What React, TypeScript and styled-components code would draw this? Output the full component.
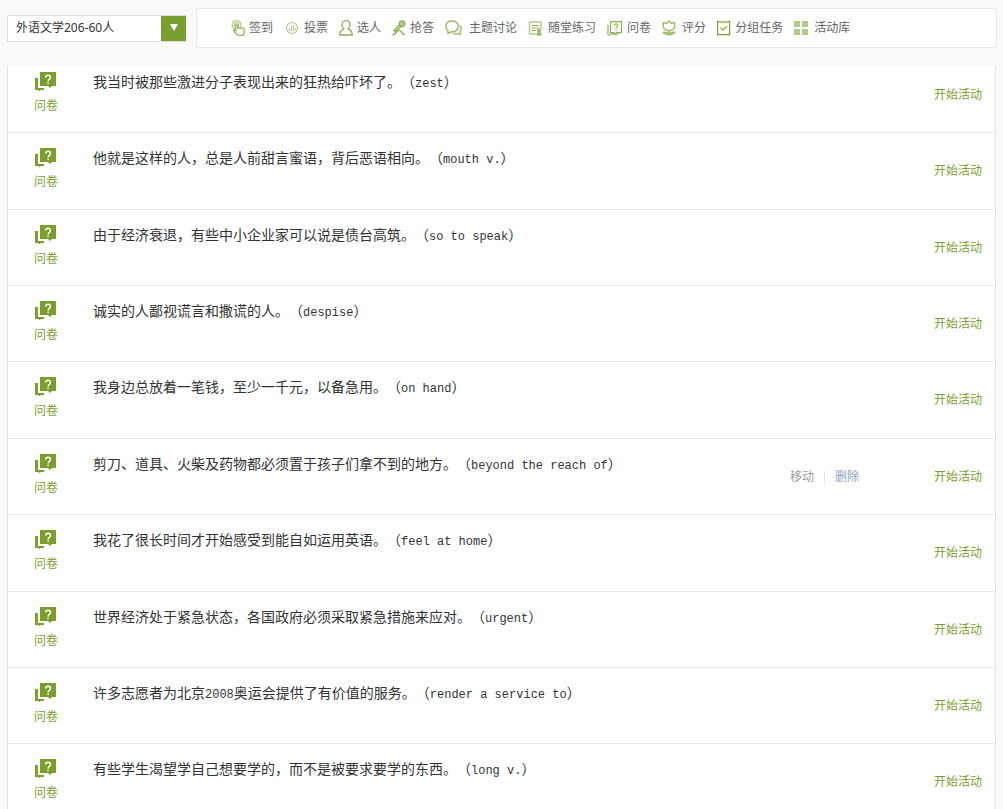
import React from 'react';
import styled, { createGlobalStyle } from 'styled-components';

const GREEN = '#7b9f2e';
const ICON = '#8fb050';
const PALE = '#b3c98a';

const GlobalStyle = createGlobalStyle`
  * { box-sizing: border-box; }
  body {
    margin: 0;
    background: #f9f9f9;
    font-family: "Noto Sans", "Noto Sans CJK SC", sans-serif;
    font-size: 12px;
    line-height: 18px;
  }
`;

const Page = styled.div`
  display: flex;
  flex-direction: column;
  height: 100vh;
  padding: 8px 6px 0 7px;
  overflow: hidden;
`;

const Header = styled.header`
  display: flex;
  align-items: center;
  gap: 10px;
  margin-bottom: 18px;
`;

const ClassPicker = styled.label`
  display: grid;
  grid-template-columns: 1fr 25px;
  flex: 0 0 179px;
  height: 27px;
  border: 1px solid #dedede;
  border-right: 0;
  background: #fff;
`;

const ClassSelect = styled.select`
  grid-area: 1 / 1 / 2 / 3;
  width: 100%;
  padding: 0 32px 0 8px;
  border: 0;
  background: transparent;
  appearance: none;
  color: #333;
  font: inherit;
`;

const PickerArrow = styled.span`
  grid-area: 1 / 2;
  display: flex;
  align-items: center;
  justify-content: center;
  background: ${GREEN};
  pointer-events: none;
`;

const Toolbar = styled.nav`
  display: flex;
  flex: 1;
  gap: 11px;
  height: 40px;
  padding-left: 34px;
  border: 1px solid #e8e8e8;
  background: #fff;
`;

const ToolButton = styled.button`
  display: flex;
  align-items: center;
  padding: 0;
  border: 0;
  background: none;
  color: #666;
  font: inherit;
  white-space: nowrap;
  cursor: pointer;
`;

const IconSlot = styled.span<{ $width: number }>`
  display: flex;
  flex: 0 0 ${(p) => p.$width}px;
`;

const ActivityList = styled.ul`
  flex: 1;
  min-height: 0;
  margin: 0 1px 0 0;
  padding: 0;
  overflow: hidden;
  list-style: none;
  border: 1px solid #e2e2e2;
  border-width: 0 1px;
  background: #fff;
`;

const Row = styled.li`
  display: flex;
  height: 76px;
  padding: 15px 13px 0 24px;
  border-bottom: 1px solid #e8e8e8;

  &:nth-child(5n), &:nth-child(5n + 2) { height: 77px; }
  &:first-child { height: 67px; padding-top: 6px; }
`;

const Kind = styled.div`
  display: flex;
  flex: 0 0 28px;
  flex-direction: column;
  align-items: center;
  gap: 6px;
  color: ${GREEN};
`;

const Title = styled.p`
  flex: 1;
  margin: 0 0 0 33px;
  color: #333;
  font-family: "Noto Sans CJK SC", sans-serif;
  font-size: 14px;
  line-height: 18px;
  text-spacing-trim: space-all;
`;

const Latin = styled.span`
  font-family: "Liberation Mono", monospace;
  font-size: 12px;
`;

const Actions = styled.div`
  display: flex;
  align-items: flex-start;
  padding-top: 14px;
`;

const RowTools = styled.div`
  display: flex;
  align-items: center;
  gap: 10px;
  margin-right: 75px;
`;

const Divider = styled.span`
  width: 1px;
  height: 12px;
  background: #e4e4e4;
`;

const TextButton = styled.button<{ $color: string }>`
  padding: 0;
  border: 0;
  background: none;
  color: ${(p) => p.$color};
  font: inherit;
  cursor: pointer;
`;

const Glyph = ({ w = 16, children }: { w?: number; children: React.ReactNode }) => (
  <svg width={w} height="16" viewBox={`0 0 ${w} 16`} fill="none" stroke={ICON} strokeWidth="1.2" strokeLinecap="round" strokeLinejoin="round" aria-hidden="true">
    {children}
  </svg>
);

const tools = [
  { label: '签到', width: 18, icon: <Glyph><circle cx="5.5" cy="5" r="4.4" stroke={PALE} /><circle cx="5.5" cy="5" r="2.4" stroke={PALE} /><path fill="#fff" d="M5.5 4.5c.8 0 1.2.5 1.2 1.2v2.500h5c1 0 1.500.7 1.500 1.500v3.600c0 1.200-.8 2.100-2 2.100H7.600c-1 0-1.500-.5-2-1.200L2.800 11c-.5-.8.4-1.600 1.300-1l.8.7V5.200c0-.4.2-.7.6-.7z" /></Glyph> },
  { label: '投票', width: 20, icon: <Glyph><circle cx="8" cy="8" r="5.500" stroke={PALE} /><path stroke={PALE} strokeWidth="1" strokeLinecap="butt" d="M5.500 8v3M7.500 6v5M9.500 5v6M11.500 8v2" /></Glyph> },
  { label: '选人', width: 18, icon: <Glyph><path strokeWidth="1.300" d="M5 9C3.700 8 3 6.500 3 4.700C3 2.300 4.700.700 7 .700s4 1.600 4 4C11 6.500 10.300 8 9 9M5 9C2.500 9.700.800 11.500.700 15h12.600C13.200 11.500 11.500 9.700 9 9" /></Glyph> },
  { label: '抢答', width: 18, icon: <Glyph><circle cx="10" cy="3.700" r="2.900" fill={PALE} /><path strokeWidth="1.400" d="M7.500 5 2 10.500l1.300 1.300L9 6.500M1 14.800c1.500 0 2-.8 3.500-2.800s3-2 4-1 1 2 2 2.500 1.500.5 2 1.300" /></Glyph> },
  { label: '主题讨论', width: 24, icon: <Glyph w={18}><path d="M3 10.700C-.8 7.500.500.800 7 .800c4 0 6.300 2.700 6.300 5.500 0 3.500-3 6-7 5.400L3 13.500z" /><path stroke={PALE} strokeWidth="1.800" d="M15 6c1.500 2.300 1.200 4.500-.2 6.200l.6 2.500-2.700-1c-1.600.4-3.200.2-4.300-.3" /></Glyph> },
  { label: '随堂练习', width: 20, icon: <Glyph><path stroke={PALE} strokeWidth="1.500" d="M7.500 14H1.500V2h11.500v7" /><path d="M4 5.500h6.500M4 8h6.500M4 10.500h3" /><circle cx="11" cy="10.700" r="1.300" fill={PALE} /><path d="m10 12.500-1 2.500h4l-1-2.500" fill={PALE} /></Glyph> },
  { label: '问卷', width: 20, icon: <Glyph><path stroke={PALE} strokeWidth="1.800" d="M1 5.500v9l1.500.5L4 14h6.500" /><path strokeLinejoin="miter" d="M3.600 1.600h10.900v11H10l-1.500 1.400L7 12.600H3.600z" /><path d="M7.300 5.300c0-1.900 3.600-1.900 3.600 0C10.900 6.800 9 6.700 9 8.300M9 10.200v.2" /></Glyph> },
  { label: '评分', width: 20, icon: <Glyph><g stroke="#9dba66"><path strokeWidth="1.400" d="m7 .9 2.200 2.300L12.400 2.500c1.300 4.700-.7 8-5.400 8S.300 7.200 1.600 2.500l3.200.7z" /><path strokeWidth="1.400" d="M7 10.500V15M7 14.700c-3 0-5-.7-5.800-2.400 3-.4 4.800.4 5.800 2.400 1-2 2.800-2.800 5.800-2.400-.8 1.700-2.800 2.400-5.800 2.400" /></g></Glyph> },
  { label: '分组任务', width: 18, icon: <Glyph><path stroke={GREEN} strokeLinejoin="miter" d="M.600 1.600h12v13h-12z" /><path stroke={PALE} strokeWidth="2.400" strokeLinecap="butt" d="M2.500 2h8.500" /><path strokeWidth="1.400" d="m4 8 2 2 3.700-3.500" /></Glyph> },
  { label: '活动库', width: 20, icon: <Glyph><path fill={PALE} stroke="none" d="M0 1h6v6H0zM8 1h6v6H8zM0 9h6v6H0zM8 9h6v6H8z" /></Glyph> },
];

const rows: { text: string[]; hovered?: boolean }[] = [
  { text: ['我当时被那些激进分子表现出来的狂热给吓坏了。（', 'zest', '）'] },
  { text: ['他就是这样的人，总是人前甜言蜜语，背后恶语相向。（', 'mouth v.', '）'] },
  { text: ['由于经济衰退，有些中小企业家可以说是债台高筑。（', 'so to speak', '）'] },
  { text: ['诚实的人鄙视谎言和撒谎的人。（', 'despise', '）'] },
  { text: ['我身边总放着一笔钱，至少一千元，以备急用。（', 'on hand', '）'] },
  { text: ['剪刀、道具、火柴及药物都必须置于孩子们拿不到的地方。（', 'beyond the reach of', '）'], hovered: true },
  { text: ['我花了很长时间才开始感受到能自如运用英语。（', 'feel at home', '）'] },
  { text: ['世界经济处于紧急状态，各国政府必须采取紧急措施来应对。（', 'urgent', '）'] },
  { text: ['许多志愿者为北京', '2008', '奥运会提供了有价值的服务。（', 'render a service to', '）'] },
  { text: ['有些学生渴望学自己想要学的，而不是被要求要学的东西。（', 'long v.', '）'] },
];

const SurveyIcon = () => (
  <svg width="22" height="19" viewBox="0 0 22 19" fill={GREEN} aria-hidden="true">
    <path d="M5 0h16v14h-4l-2 2-2-2H5z" />
    <path d="M0 6h3v10h6v2H6l-1.500 1L3 18H0z" />
    <path d="M10.700 5.500c0-3 4.800-3 4.800 0 0 2-2.400 1.800-2.400 4M13.100 10.500v1.500" fill="none" stroke="#fff" strokeWidth="1.400" />
  </svg>
);

export default function App() {
  return (
    <>
      <GlobalStyle />
      <Page>
        <Header>
          <ClassPicker>
            <ClassSelect aria-label="班级">
              <option>外语文学206-60人</option>
            </ClassSelect>
            <PickerArrow>
              <svg width="10" height="8" viewBox="0 0 10 8" aria-hidden="true"><path fill="#fff" d="M1 0h8L5 7z" /></svg>
            </PickerArrow>
          </ClassPicker>
          <Toolbar>
            {tools.map((t) => (
              <ToolButton key={t.label} type="button">
                <IconSlot $width={t.width}>{t.icon}</IconSlot>
                {t.label}
              </ToolButton>
            ))}
          </Toolbar>
        </Header>
        <ActivityList>
          {rows.map((row) => (
            <Row key={row.text[0]}>
              <Kind>
                <SurveyIcon />
                问卷
              </Kind>
              <Title>
                {row.text.map((part, i) => (i % 2 ? <Latin key={i}>{part}</Latin> : part))}
              </Title>
              <Actions>
                {row.hovered && (
                  <RowTools>
                    <TextButton type="button" $color="#999">移动</TextButton>
                    <Divider />
                    <TextButton type="button" $color="#8c9fc0">删除</TextButton>
                  </RowTools>
                )}
                <TextButton type="button" $color={GREEN}>开始活动</TextButton>
              </Actions>
            </Row>
          ))}
        </ActivityList>
      </Page>
    </>
  );
}
